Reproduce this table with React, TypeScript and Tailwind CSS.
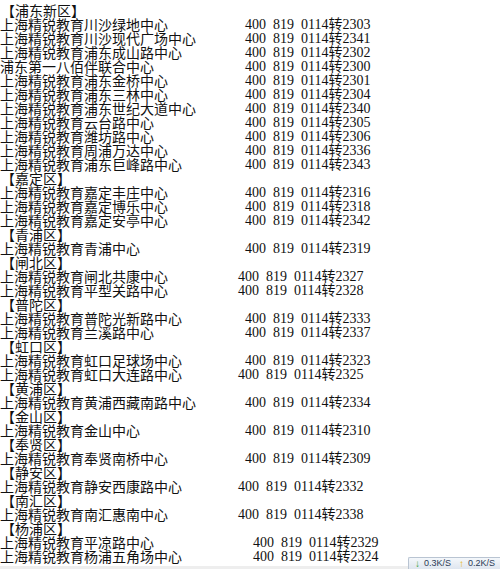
import React from 'react'

type Row =
  | { kind: 'district'; name: string }
  | { kind: 'center'; name: string; ext: string; shift?: 'left' | 'right' }

const rows: Row[] = [
  { kind: 'district', name: '浦东新区' },
  { kind: 'center', name: '上海精锐教育川沙绿地中心', ext: '2303' },
  { kind: 'center', name: '上海精锐教育川沙现代广场中心', ext: '2341' },
  { kind: 'center', name: '上海精锐教育浦东成山路中心', ext: '2302' },
  { kind: 'center', name: '浦东第一八佰伴联合中心', ext: '2300' },
  { kind: 'center', name: '上海精锐教育浦东金桥中心', ext: '2301' },
  { kind: 'center', name: '上海精锐教育浦东三林中心', ext: '2304' },
  { kind: 'center', name: '上海精锐教育浦东世纪大道中心', ext: '2340' },
  { kind: 'center', name: '上海精锐教育云台路中心', ext: '2305' },
  { kind: 'center', name: '上海精锐教育潍坊路中心', ext: '2306' },
  { kind: 'center', name: '上海精锐教育周浦万达中心', ext: '2336' },
  { kind: 'center', name: '上海精锐教育浦东巨峰路中心', ext: '2343' },
  { kind: 'district', name: '嘉定区' },
  { kind: 'center', name: '上海精锐教育嘉定丰庄中心', ext: '2316' },
  { kind: 'center', name: '上海精锐教育嘉定博乐中心', ext: '2318' },
  { kind: 'center', name: '上海精锐教育嘉定安亭中心', ext: '2342' },
  { kind: 'district', name: '青浦区' },
  { kind: 'center', name: '上海精锐教育青浦中心', ext: '2319' },
  { kind: 'district', name: '闸北区' },
  { kind: 'center', name: '上海精锐教育闸北共康中心', ext: '2327', shift: 'left' },
  { kind: 'center', name: '上海精锐教育平型关路中心', ext: '2328', shift: 'left' },
  { kind: 'district', name: '普陀区' },
  { kind: 'center', name: '上海精锐教育普陀光新路中心', ext: '2333' },
  { kind: 'center', name: '上海精锐教育兰溪路中心', ext: '2337' },
  { kind: 'district', name: '虹口区' },
  { kind: 'center', name: '上海精锐教育虹口足球场中心', ext: '2323' },
  { kind: 'center', name: '上海精锐教育虹口大连路中心', ext: '2325', shift: 'left' },
  { kind: 'district', name: '黄浦区' },
  { kind: 'center', name: '上海精锐教育黄浦西藏南路中心', ext: '2334' },
  { kind: 'district', name: '金山区' },
  { kind: 'center', name: '上海精锐教育金山中心', ext: '2310' },
  { kind: 'district', name: '奉贤区' },
  { kind: 'center', name: '上海精锐教育奉贤南桥中心', ext: '2309' },
  { kind: 'district', name: '静安区' },
  { kind: 'center', name: '上海精锐教育静安西康路中心', ext: '2332', shift: 'left' },
  { kind: 'district', name: '南汇区' },
  { kind: 'center', name: '上海精锐教育南汇惠南中心', ext: '2338', shift: 'left' },
  { kind: 'district', name: '杨浦区' },
  { kind: 'center', name: '上海精锐教育平凉路中心', ext: '2329', shift: 'right' },
  { kind: 'center', name: '上海精锐教育杨浦五角场中心', ext: '2324', shift: 'right' },
]

const cjk = "font-['Noto_Sans_CJK_SC',sans-serif]"
const serif = "font-['Liberation_Serif','Noto_Sans_CJK_SC',serif]"

function Phone({ ext, shift }: { ext: string; shift?: 'left' | 'right' }) {
  const offset = shift === 'left' ? 'ml-[-7px]' : shift === 'right' ? 'ml-[8px]' : 'ml-0'
  return (
    <span className={`${offset} whitespace-pre ${serif} text-[14px] [word-spacing:3.5px]`}>
      400 819 0114<span className={cjk}>转</span>{ext}
    </span>
  )
}

export default function App() {
  return (
    <div className="relative h-[569px] w-[500px] overflow-hidden bg-white text-[#111]">
      <div className="pt-[3px]">
        {rows.map((row, i) =>
          row.kind === 'district' ? (
            <div key={i} className={`flex h-[14px] items-center pl-[1px] text-[14px] leading-[14px] ${cjk}`}>
              【{row.name}】
            </div>
          ) : (
            <div key={i} className="flex h-[14px] items-center text-[14px] leading-[14px]">
              <span className={`w-[245px] shrink-0 whitespace-nowrap ${cjk}`}>{row.name}</span>
              <Phone ext={row.ext} shift={row.shift} />
            </div>
          )
        )}
      </div>

      <div className="absolute bottom-0 left-0 h-[3px] w-full bg-[#eeeeee]" />

      <div className="absolute bottom-0 right-0 flex h-[12px] w-[92px] items-center gap-[4px] overflow-hidden rounded-tl-[2px] border-l border-t border-[#b9c4d2] bg-gradient-to-b from-[#f4f7fb] to-[#dfe6ef] pl-[6px] font-['Liberation_Sans',sans-serif] text-[9px] leading-none text-[#2b3a55]">
        <span className="text-[10px] font-bold text-[#3aa53a]">↓</span>
        <span className="whitespace-nowrap">0.3K/S</span>
        <span className="ml-[4px] text-[10px] font-bold text-[#e8b400]">↑</span>
        <span className="whitespace-nowrap">0.2K/S</span>
      </div>
    </div>
  )
}
